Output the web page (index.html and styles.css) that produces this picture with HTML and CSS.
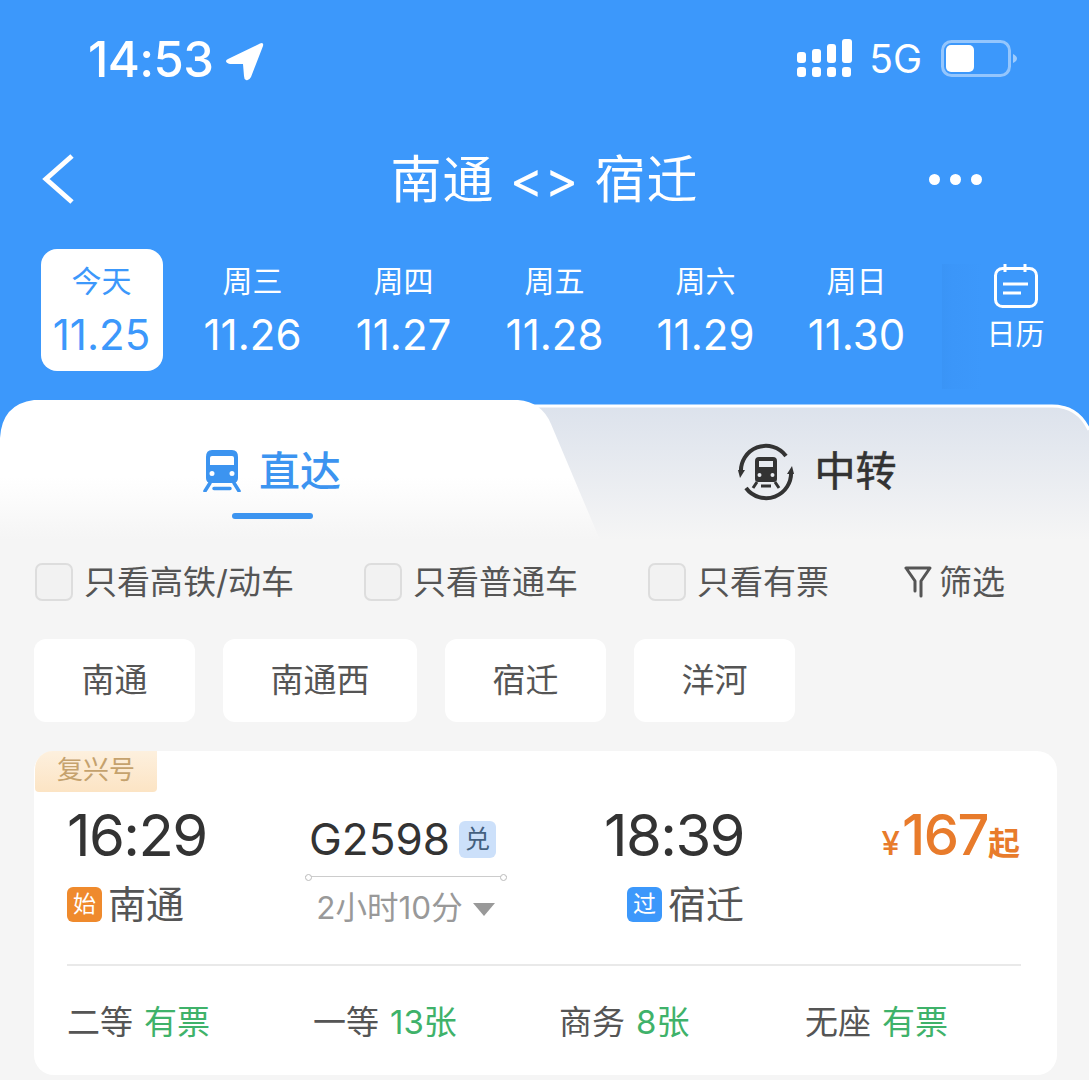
FILE: index.html
```html
<!DOCTYPE html>
<html lang="zh-CN">
<head>
<meta charset="utf-8">
<title>南通 &lt;&gt; 宿迁</title>
<link rel="stylesheet" href="styles.css">
</head>
<body>
<div class="screen">
  <header class="header">
    <div class="status">
      <div class="status-left">
        <span class="clock">14:53</span>
        <svg class="loc" viewBox="0 0 38 39"><path d="M2 17 L34 1.500 Q38 0 37 4 L25 35 Q23 39 20 38 Q18 37 18 34 L17 22 L4 22 Q0 21 0 19 Q0 18 2 17 Z"/></svg>
      </div>
      <div class="status-right">
        <svg class="signal" viewBox="0 0 55 39">
          <rect x="0" y="13" width="9" height="11" rx="3"/><rect x="15" y="10" width="9" height="14" rx="3"/><rect x="30" y="5" width="9" height="19" rx="3"/><rect x="45" y="0" width="10" height="24" rx="3"/>
          <rect x="0" y="28" width="9" height="10" rx="3"/><rect x="15" y="28" width="9" height="10" rx="3"/><rect x="30" y="28" width="9" height="10" rx="3"/><rect x="45" y="28" width="9" height="10" rx="3"/>
        </svg>
        <span class="net">5G</span>
        <svg class="battery" viewBox="0 0 77 37">
          <rect x="1.500" y="1.500" width="67" height="34" rx="9" class="batt-shell"/>
          <rect x="5" y="5" width="28" height="27" rx="5" class="batt-fill"/>
          <path d="M72 14 Q76 16 76 18.500 Q76 21 72 23 Z" class="batt-tip"/>
        </svg>
      </div>
    </div>
    <nav class="nav">
      <svg class="back" viewBox="0 0 34 50"><path d="M31 2 L5 25 L31 48"/></svg>
      <h1 class="title">南通 &lt;&gt; 宿迁</h1>
      <div class="more"><i></i><i></i><i></i></div>
    </nav>
    <div class="dates">
      <div class="date active"><span class="dow">今天</span><span class="day">11.25</span></div>
      <div class="date"><span class="dow">周三</span><span class="day">11.26</span></div>
      <div class="date"><span class="dow">周四</span><span class="day">11.27</span></div>
      <div class="date"><span class="dow">周五</span><span class="day">11.28</span></div>
      <div class="date"><span class="dow">周六</span><span class="day">11.29</span></div>
      <div class="date"><span class="dow">周日</span><span class="day">11.30</span></div>
      <div class="calendar">
        <svg class="cal-icon" viewBox="0 0 44 44"><rect x="1.500" y="4.500" width="41" height="38" rx="7"/><path d="M11 0 V8 M31 0 V8 M9 20 H34 M9 29 H27"/></svg>
        <span class="cal-label">日历</span>
      </div>
    </div>
  </header>

  <section class="tabs">
    <svg class="tab-bg" viewBox="0 0 1089 140" preserveAspectRatio="none">
      <defs>
        <linearGradient id="gr" x1="0" y1="0" x2="0" y2="1"><stop offset="0" stop-color="#dce2ec"/><stop offset="1" stop-color="#f5f5f5"/></linearGradient>
        <linearGradient id="gl" x1="0" y1="0" x2="0" y2="1"><stop offset="0" stop-color="#fff"/><stop offset=".55" stop-color="#fff"/><stop offset="1" stop-color="#f5f5f5"/></linearGradient>
      </defs>
      <path d="M500 5 H1052 Q1078 5 1089 30 V140 H500 Z" fill="url(#gr)" stroke="none"/>
      <path d="M500 6 H1052 Q1078 6 1089 30" fill="none" stroke="#fff" stroke-width="3"/>
      <path d="M0 140 V38 Q2 4 34 0 H518 Q542 2 551 24 L600 140 Z" fill="url(#gl)"/>
    </svg>
    <div class="tab tab-on">
      <svg class="ic-direct" viewBox="0 0 38 42">
        <path d="M9 0 H29 Q35 0 35 7 V28 Q35 33 30 33 H8 Q3 33 3 28 V7 Q3 0 9 0 Z M9 6 Q7 6 7 8 V15 H31 V8 Q31 6 29 6 Z M9 21 A2.500 2.500 0 1 0 9 26 A2.500 2.500 0 1 0 9 21 Z M29 21 A2.500 2.500 0 1 0 29 26 A2.500 2.500 0 1 0 29 21 Z" fill-rule="evenodd"/>
        <path d="M7 33 L2 41 M31 33 L36 41 M11 38.500 H27" class="legs"/>
      </svg>
      <span class="tab-label">直达</span>
      <i class="tab-bar"></i>
    </div>
    <div class="tab tab-off">
      <svg class="ic-transfer" viewBox="0 0 58 58">
        <path d="M4 30 A25 25 0 0 1 49 13" class="arc"/>
        <path d="M54 28 A25 25 0 0 1 9 45" class="arc"/>
        <path d="M1 27 L8 27 L3 35 Z M57 31 L50 31 L55 23 Z" class="arrow"/>
        <path d="M22 14 H36 Q40 14 40 18 V36 Q40 39 37 39 H21 Q18 39 18 36 V18 Q18 14 22 14 Z M22 18 V24 H36 V18 Z M22.500 30 A2 2 0 1 0 22.500 34 A2 2 0 1 0 22.500 30 Z M35.500 30 A2 2 0 1 0 35.500 34 A2 2 0 1 0 35.500 30 Z" fill-rule="evenodd" class="arrow"/>
        <path d="M20 39 L16 45 M38 39 L42 45 M24 43 H34" class="arc thin"/>
      </svg>
      <span class="tab-label">中转</span>
    </div>
  </section>

  <div class="filters">
    <label class="check"><i class="box"></i>只看高铁/动车</label>
    <label class="check"><i class="box"></i>只看普通车</label>
    <label class="check"><i class="box"></i>只看有票</label>
    <div class="sift">
      <svg class="funnel" viewBox="0 0 28 32"><path d="M2 2 H26 L17 15 V30 M2 2 L11 15 V25"/></svg>
      筛选
    </div>
  </div>

  <div class="stations">
    <div class="chip">南通</div>
    <div class="chip">南通西</div>
    <div class="chip">宿迁</div>
    <div class="chip">洋河</div>
  </div>

  <article class="card">
    <div class="badge">复兴号</div>
    <div class="row-main">
      <div class="end depart">
        <div class="time">16:29</div>
        <div class="place"><b class="tag tag-start">始</b>南通</div>
      </div>
      <div class="train">
        <div class="train-no"><span>G2598</span><b class="redeem">兑</b></div>
        <div class="track"></div>
        <div class="duration">2小时10分<i class="caret"></i></div>
      </div>
      <div class="end arrive">
        <div class="time">18:39</div>
        <div class="place"><b class="tag tag-pass">过</b>宿迁</div>
      </div>
      <div class="price"><small>¥</small><strong>167</strong><em>起</em></div>
    </div>
    <div class="seats">
      <div class="seat">二等<span>有票</span></div>
      <div class="seat">一等<span>13张</span></div>
      <div class="seat">商务<span>8张</span></div>
      <div class="seat">无座<span>有票</span></div>
    </div>
  </article>
</div>
</body>
</html>
```
FILE: styles.css
```css
* { box-sizing: border-box; margin: 0; padding: 0; }
html, body { width: 1089px; height: 1080px; overflow: hidden; }
body {
  font-family: Inter, "Noto Sans CJK SC", sans-serif;
  background: #f5f5f5;
  color: #333;
}
i, em { font-style: normal; }
.screen { width: 1089px; height: 1080px; overflow: hidden; background: #f5f5f5; }

.header { background: #3c98fb; height: 400px; color: #fff; }

.status { height: 118px; display: flex; justify-content: space-between; padding: 34px 71px 0 88px; }
.status-left { display: flex; align-items: flex-start; gap: 13px; }
.clock { font-size: 49px; line-height: 52px; font-weight: 500; letter-spacing: -.6px; }
.loc { width: 38px; height: 39px; fill: #fff; margin-top: 8px; }
.status-right { display: flex; align-items: flex-start; }
.signal { width: 55px; height: 39px; fill: #fff; margin-top: 5px; }
.net { font-size: 39px; line-height: 50px; margin-left: 17px; font-weight: 400; }
.battery { width: 77px; height: 37px; margin-left: 19px; margin-top: 6px; }
.batt-shell { fill: none; stroke: rgba(255,255,255,.45); stroke-width: 3; }
.batt-fill { fill: #fff; }
.batt-tip { fill: rgba(255,255,255,.5); }

.nav { height: 122px; display: flex; align-items: center; justify-content: space-between; padding: 0 107px 0 41px; position: relative; }
.back { width: 34px; height: 50px; fill: none; stroke: #fff; stroke-width: 5; }
.title { font-size: 51px; line-height: 60px; font-weight: 400; letter-spacing: 1px; position: absolute; left: 0; right: 0; top: 32px; text-align: center; }
.more { display: flex; gap: 10px; }
.more i { width: 11px; height: 11px; border-radius: 50%; background: #fff; }

.dates { display: flex; padding: 9px 0 0 26px; }
.date { width: 151px; height: 122px; display: flex; flex-direction: column; align-items: center; }
.dow { font-size: 30px; line-height: 34px; margin-top: 15px; font-weight: 400; }
.day { font-size: 42px; line-height: 48px; margin-top: 13px; font-weight: 400; }
.active { position: relative; color: #3c98fb; }
.active::before { content: ""; position: absolute; top: 0; bottom: 0; left: 14.500px; right: 14.500px; background: #fff; border-radius: 16px; z-index: 0; }
.active span { position: relative; }
.calendar { margin-left: 10px; flex: 1; height: 125px; margin-top: 15px; display: flex; flex-direction: column; align-items: center; background: linear-gradient(90deg, #3a94f6 0, #3b96f9 10px, #3c98fb 40px); }
.cal-icon { width: 44px; height: 44px; fill: none; stroke: #fff; stroke-width: 3; }
.cal-label { font-size: 29px; line-height: 36px; margin-top: 9px; }

.tabs { position: relative; height: 130px; display: grid; grid-template-columns: 544px 545px; background: linear-gradient(180deg, #3c98fb 0 40px, #f5f5f5 40px); }
.tab-bg { position: absolute; left: 0; top: 0; width: 1089px; height: 140px; display: block; }
.tab { position: relative; display: flex; justify-content: center; align-items: flex-start; height: 130px; padding-top: 46px; }
.tab-label { font-size: 41px; line-height: 50px; }
.tab-on { color: #3c94f0; gap: 18px; }
.tab-on .tab-label { font-weight: 500; }
.tab-off { color: #333; gap: 20px; }
.tab-off .tab-label { font-weight: 400; -webkit-text-stroke: .6px #333; }
.ic-direct { width: 38px; height: 42px; fill: #3c94f0; margin-top: 4px; }
.legs { fill: none; stroke: #3c94f0; stroke-width: 3.500; stroke-linecap: round; }
.ic-transfer { width: 58px; height: 58px; margin-top: -3px; }
.arc { fill: none; stroke: #333; stroke-width: 4; }
.thin { stroke-width: 3; }
.arrow { fill: #333; }
.tab-bar { position: absolute; left: 232px; top: 113px; width: 81px; height: 6px; border-radius: 3px; background: #3c94f0; }

.filters { position: relative; display: flex; gap: 70px; padding: 33px 0 0 35px; height: 71px; }
.check { display: flex; align-items: center; gap: 11px; font-size: 33px; line-height: 38px; color: #555; white-space: nowrap; }
.box { width: 38px; height: 38px; border: 2px solid #ddd; border-radius: 7px; background: #f2f2f2; }
.sift { display: flex; align-items: center; gap: 7px; font-size: 33px; line-height: 38px; color: #555; margin-left: 5px; }
.funnel { width: 28px; height: 32px; fill: none; stroke: #555; stroke-width: 3; stroke-linejoin: round; stroke-linecap: round; }

.stations { display: flex; gap: 28px; padding: 38px 0 0 34px; }
.chip { height: 83px; padding: 0 47.500px; background: #fff; border-radius: 12px; font-size: 33px; line-height: 83px; color: #555; }

.card { margin: 29px 32px 0 34px; height: 324px; background: #fff; border-radius: 20px; padding: 0 36px 0 33px; position: relative; }
.badge { width: 122px; height: 41px; margin-left: -32px; border-radius: 18px 0 4px 4px; background: linear-gradient(180deg, #fdf0de, #fce4c4); color: #c5a26d; font-size: 26px; line-height: 38px; padding-left: 22px; }
.row-main { display: flex; height: 174px; border-bottom: 2px solid #e9e9e9; }
.end { display: flex; flex-direction: column; }
.depart { width: 238px; }
.arrive { margin-left: 97px; width: 140px; align-items: flex-end; }
.time { font-size: 58px; line-height: 70px; font-weight: 400; color: #333; letter-spacing: -1.600px; margin-top: 8px; white-space: nowrap; }
.place { display: flex; align-items: center; font-size: 38px; line-height: 50px; color: #555; margin-top: 9px; gap: 6px; }
.tag { width: 35px; height: 35px; border-radius: 6px; color: #fff; font-size: 23px; line-height: 35px; font-weight: 400; text-align: center; }
.tag-start { background: #ef8a2d; }
.tag-pass { background: #3c98fb; }
.train { width: 202px; display: flex; flex-direction: column; align-items: center; }
.train-no { display: flex; align-items: center; gap: 9px; font-size: 44px; line-height: 44px; margin-top: 25px; margin-left: -7px; color: #333; }
.redeem { width: 37px; height: 37px; border-radius: 6px; background: #cce0fa; font-size: 25px; line-height: 37px; font-weight: 400; text-align: center; color: #44607f; }
.track { position: relative; width: 202px; height: 1px; background: #ccc; margin-top: 15px; }
.track::before, .track::after { content: ""; position: absolute; top: -2px; width: 5px; height: 5px; border-radius: 50%; border: 1px solid #bbb; background: #fff; }
.track::before { left: 0; }
.track::after { right: 0; }
.duration { display: flex; align-items: center; font-size: 31.500px; line-height: 40px; color: #999; margin-top: 11px; gap: 10px; margin-left: -1px; white-space: nowrap; }
.caret { width: 0; height: 0; border-left: 11px solid transparent; border-right: 11px solid transparent; border-top: 13px solid #999; margin-top: 2px; }
.price { flex: 1; display: flex; justify-content: flex-end; align-items: baseline; color: #e87b2b; height: 70px; margin-top: 8px; line-height: 70px; }
.price small { font-size: 33px; font-weight: 500; margin-right: 2px; }
.price strong { font-size: 56px; font-weight: 500; letter-spacing: -1.500px; }
.price em { font-size: 32px; font-weight: 700; margin-right: 1px; }

.seats { display: grid; grid-template-columns: repeat(4, 246px); padding-top: 32px; }
.seat { font-size: 33px; line-height: 48px; color: #555; white-space: nowrap; }
.seat span { color: #3fb26a; margin-left: 11px; }
```
